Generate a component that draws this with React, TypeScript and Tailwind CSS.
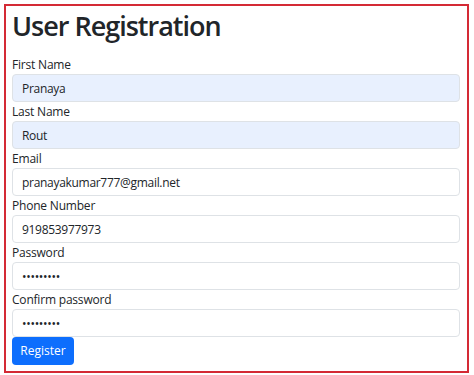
import React from "react";

const fields = [
  { label: "First Name", value: "Pranaya", type: "text", filled: true },
  { label: "Last Name", value: "Rout", type: "text", filled: true },
  { label: "Email", value: "pranayakumar777@gmail.net", type: "email", filled: false },
  { label: "Phone Number", value: "919853977973", type: "tel", filled: false },
  { label: "Password", value: "123456789", type: "password", filled: false },
  { label: "Confirm password", value: "123456789", type: "password", filled: false },
];

function App() {
  return (
    <div className="w-[474px] h-[375px] bg-white p-1 font-['Open_Sans',sans-serif] text-[#212529]">
      <div className="h-[369px] w-[465px] border-2 border-[#d42a35] pl-[6px] pr-[7px]">
        <h1 className="h-[49px] pt-[2px] text-[27px] leading-[36px] font-semibold tracking-[-1px]">
          User Registration
        </h1>
        <form className="flex flex-col" onSubmit={(e) => e.preventDefault()}>
          {fields.map((f) => (
            <div key={f.label} className="flex flex-col">
              <label className="h-[19px] text-[12px] leading-[19px] tracking-[-0.2px]">{f.label}</label>
              <input
                type={f.type}
                defaultValue={f.value}
                className={`h-[28px] rounded border border-[#dee2e6] px-[9px] text-[12px] tracking-[-0.3px] text-[#212529] outline-none ${
                  f.filled ? "bg-[#e8f0fe]" : "bg-white"
                }`}
              />
            </div>
          ))}
          <div>
            <button
              type="submit"
              className="h-[28px] w-[62px] rounded bg-[#0d6efd] text-[12px] text-white"
            >
              Register
            </button>
          </div>
        </form>
      </div>
    </div>
  );
}

export default App;
